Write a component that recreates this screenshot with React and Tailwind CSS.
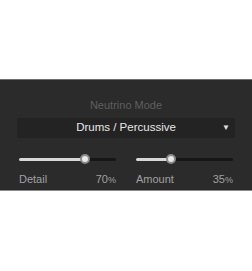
export default function App() {
  const font = { fontFamily: '"Liberation Sans", Arial, sans-serif' };
  const Slider = ({ pct, label, value }) => (
    <div className="flex-1 flex flex-col">
      <div className="relative h-[10px] flex items-center">
        <div className="w-full h-[3px] bg-[#161616] rounded-full" />
        <div className="absolute left-0 h-[3px] bg-[#d8d8d8] rounded-full" style={{ width: `${pct}%` }} />
        <div
          className="absolute w-[10px] h-[10px] rounded-full bg-[#e8e8e8] border-2 border-[#8a8a8a] -translate-x-1/2"
          style={{ left: `${pct}%` }}
        />
      </div>
      <div className="flex justify-between mt-[10px] text-[11px] text-[#a0a0a0] leading-none">
        <span>{label}</span>
        <span>
          {value}
          <span className="text-[9px]">%</span>
        </span>
      </div>
    </div>
  );
  return (
    <div className="w-[252px] h-[271px] bg-white flex flex-col" style={font}>
      <div className="h-[79px]" />
      <div className="h-[112px] bg-[#2b2b2b] border-t border-[#6e6e6e] border-b border-b-[#8a8a8a] px-[17px] flex flex-col">
        <div className="text-center text-[11px] text-[#5f5f5f] mt-[20px] leading-none">Neutrino Mode</div>
        <div className="mt-[7px] h-[20px] bg-[#232323] flex items-center relative">
          <div className="flex-1 text-center text-[11.5px] text-[#e6e6e6] leading-none">Drums / Percussive</div>
          <span className="absolute right-[5px] text-[8px] text-[#e0e0e0]">▼</span>
        </div>
        <div className="flex gap-[20px] mt-[16px] px-[2px]">
          <Slider pct={68} label="Detail" value="70" />
          <Slider pct={36} label="Amount" value="35" />
        </div>
      </div>
    </div>
  );
}
